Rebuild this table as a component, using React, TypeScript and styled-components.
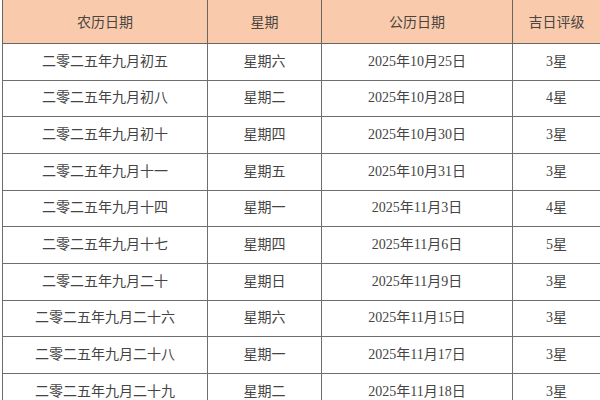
import React from "react";
import styled, { createGlobalStyle } from "styled-components";

const GlobalStyle = createGlobalStyle`
  html, body {
    margin: 0;
    padding: 0;
    background: #ffffff;
    overflow: hidden;
  }
  body {
    font-family: "Noto Sans CJK SC", "Liberation Serif", serif;
  }
`;

const Page = styled.div`
  width: 600px;
  height: 400px;
  padding-left: 2px;
  box-sizing: border-box;
  overflow: hidden;
`;

const Table = styled.table`
  border-collapse: collapse;
  table-layout: fixed;
  width: 596px;
  margin-top: -1px;
`;

const HeadRow = styled.tr`
  height: 44px;
`;

const BodyRow = styled.tr`
  height: 36.67px;
`;

const HeadCell = styled.th<{ $w: number }>`
  width: ${(p) => p.$w}px;
  padding: 0 0 2px;
  background: #f9cbac;
  border: 1px solid #6b6560;
  color: #4a4542;
  font-size: 14px;
  font-weight: 400;
  text-align: center;
  vertical-align: middle;
`;

const Cell = styled.td`
  padding: 0;
  border: 1px solid #6e6e6e;
  color: #444444;
  font-size: 14px;
  line-height: 16px;
  text-align: center;
  vertical-align: middle;
  font-family: "Liberation Serif", "Noto Sans CJK SC", serif;
`;

const columns = [
  { title: "农历日期", w: 204 },
  { title: "星期", w: 113 },
  { title: "公历日期", w: 190 },
  { title: "吉日评级", w: 87 },
];

const rows = [
  ["二零二五年九月初五", "星期六", "2025年10月25日", "3星"],
  ["二零二五年九月初八", "星期二", "2025年10月28日", "4星"],
  ["二零二五年九月初十", "星期四", "2025年10月30日", "3星"],
  ["二零二五年九月十一", "星期五", "2025年10月31日", "3星"],
  ["二零二五年九月十四", "星期一", "2025年11月3日", "4星"],
  ["二零二五年九月十七", "星期四", "2025年11月6日", "5星"],
  ["二零二五年九月二十", "星期日", "2025年11月9日", "3星"],
  ["二零二五年九月二十六", "星期六", "2025年11月15日", "3星"],
  ["二零二五年九月二十八", "星期一", "2025年11月17日", "3星"],
  ["二零二五年九月二十九", "星期二", "2025年11月18日", "3星"],
];

export default function App() {
  return (
    <>
      <GlobalStyle />
      <Page>
        <Table>
          <thead>
            <HeadRow>
              {columns.map((c) => (
                <HeadCell key={c.title} $w={c.w}>
                  {c.title}
                </HeadCell>
              ))}
            </HeadRow>
          </thead>
          <tbody>
            {rows.map((r) => (
              <BodyRow key={r[0]}>
                {r.map((v, i) => (
                  <Cell key={i}>{v}</Cell>
                ))}
              </BodyRow>
            ))}
          </tbody>
        </Table>
      </Page>
    </>
  );
}
